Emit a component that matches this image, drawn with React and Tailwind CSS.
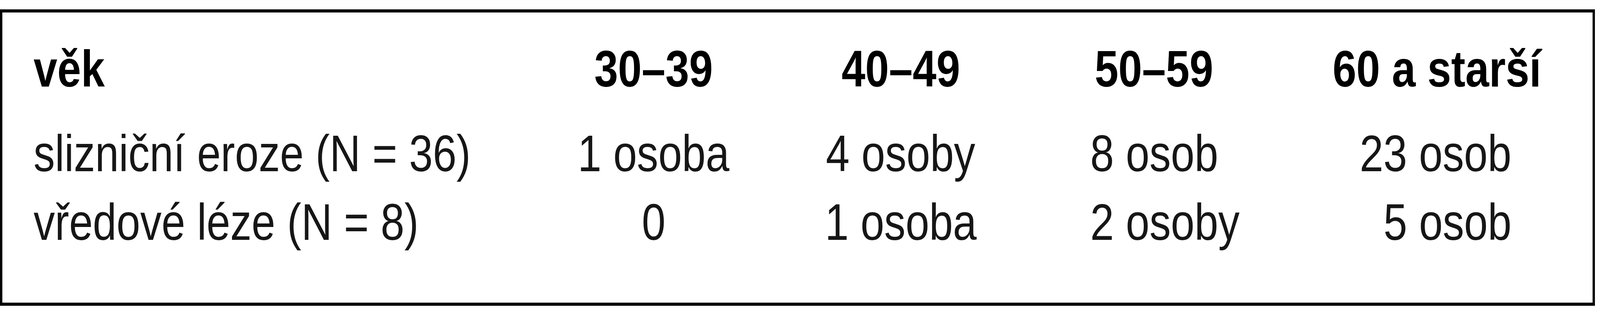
const header = ["věk", "30–39", "40–49", "50–59", "60 a starší"];

const rows = [
  ["slizniční eroze (N = 36)", "1 osoba", "4 osoby", "8 osob", "23 osob"],
  ["vředové léze (N = 8)", "0", "1 osoba", "2 osoby", "5 osob"],
];

// cell alignment + transform origin so the narrowed text stays anchored
const bodyAlign = [
  ["text-left", "origin-left"],
  ["text-center", "origin-center"],
  ["text-center", "origin-center"],
  ["text-left pl-[4.107vw]", "origin-left"],
  ["text-right pr-[4.948vw]", "origin-right"],
];

// the table's typeface is a narrow sans: Liberation Sans squeezed horizontally
const Cell = ({ align, origin, bold, children }) => (
  <div className={`whitespace-nowrap ${align} ${bold ? "font-bold text-black mb-[41px]" : ""}`}>
    <span className={`inline-block scale-x-[83.3%] ${origin}`}>{children}</span>
  </div>
);

const App = () => {
  return (
    <div className="bg-white w-full h-[800px] pt-[24px] font-['Liberation_Sans',Arial,sans-serif]">
      <div className="w-[99.679vw] h-[760px] border-y-[8px] border-x-[0.1603vw] border-black box-border pt-[57px] pl-[1.963vw]">
        <div className="grid grid-cols-[31.03vw_15.425vw_15.465vw_16.186vw_19.191vw] text-[131px] leading-[176px] text-[#161616]">
          {header.map((h, i) => (
            <Cell
              key={h}
              bold
              align={i === 0 ? "text-left" : "text-center"}
              origin={i === 0 ? "origin-left" : "origin-center"}
            >
              {h}
            </Cell>
          ))}
          {rows.map((row) =>
            row.map((cell, i) => (
              <Cell key={row[0] + i} align={bodyAlign[i][0]} origin={bodyAlign[i][1]}>
                {cell}
              </Cell>
            ))
          )}
        </div>
      </div>
    </div>
  );
};

export default App;
